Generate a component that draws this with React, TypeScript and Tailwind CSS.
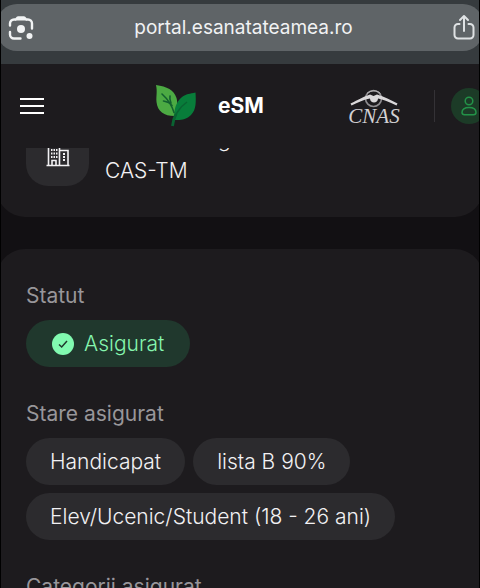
import type { ReactNode } from "react";

const insuredStates = ["Handicapat", "lista B 90%", "Elev/Ucenic/Student (18 - 26 ani)"];

function LensIcon() {
  return (
    <svg className="size-7" viewBox="0 0 28 28" fill="none" stroke="#f1f3f4" strokeWidth="2.4" strokeLinecap="round" aria-hidden="true">
      <path d="M3 11.5V9.5a4 4 0 0 1 4-4h1.5M19.5 5.5H21a4 4 0 0 1 4 4v5M3 18v2.5a4 4 0 0 0 4 4h6.5" />
      <path d="M8 6.6c0-2 1.200-4.400 3-4.400h6c1.800 0 3 2.400 3 4.400z" fill="#f1f3f4" stroke="none" />
      <circle cx="14" cy="15" r="4" fill="#f1f3f4" stroke="none" />
      <circle cx="22.5" cy="22" r="3" fill="#f1f3f4" stroke="none" />
    </svg>
  );
}

function ShareIcon() {
  return (
    <svg className="h-7 w-6" viewBox="0 0 24 28" fill="none" stroke="#dfe2e4" strokeWidth="2" strokeLinecap="round" strokeLinejoin="round" aria-hidden="true">
      <path d="M7.5 10H6a3.500 3.500 0 0 0-3.500 3.500v7.500A3.500 3.500 0 0 0 6 24.500h12a3.500 3.500 0 0 0 3.500-3.500v-7.500A3.500 3.500 0 0 0 18 10h-1.500" />
      <path d="M12 17V2.500M8 6l4-4 4 4" />
    </svg>
  );
}

function LeafLogo() {
  return (
    <svg className="size-11" viewBox="0 0 44 44" aria-hidden="true">
      <path d="M2 1c11 1.500 18 5 20.500 13 1.500 5 .5 12-2 18C10 32 3.500 27.500 2.500 18 2 12 3.500 8 2 1z" fill="#4caa43" />
      <path d="M41.500 8.500c.5 9 1 17-4.500 22.500-4.500 4.500-10.500 5.500-16 5-2-9 1-18.500 7-23 4-3 8-3.200 13.500-4.500z" fill="#087d3a" />
      <path d="M8 10c5 4.500 9.500 10 12 18.500M9.500 17c4 .8 6.500 2 8.500 4.500M16 12c-.5 2.500-.2 4.500 1 7" fill="none" stroke="#12602f" strokeWidth="1.600" strokeLinecap="round" />
      <path d="M18.500 42c.8-5 2-9.500 5-14 2.500-4 6.500-8 9.500-10" fill="none" stroke="#0a6332" strokeWidth="1.500" />
      <path d="M18.500 42c.6-4.500 1.600-8.500 3.500-12" fill="none" stroke="#0a6332" strokeWidth="2.800" />
    </svg>
  );
}

function CnasLogo() {
  return (
    <div className="flex w-14 flex-col items-center">
      <svg className="h-[19px] w-12" viewBox="0 0 48 19" fill="none" aria-hidden="true">
        <circle cx="23.500" cy="9.500" r="8" stroke="#8f8d90" strokeWidth="1.600" />
        <path d="M.5 14.500C8 11 15 7 20 5.500l3.500 1.500L27 5.500c7 2 14 5.500 20.500 9l-1 2C39 13 33 10.500 28 9.500c0 2.500-2 4-4 4s-4-1.500-4-4C14 10.500 8 13.500 1.500 16.500z" fill="#dad8da" />
        <path d="M17 4.500c4-3.500 10-3.500 13.500 0" stroke="#b9b7ba" strokeWidth="1" />
      </svg>
      <span className="font-['Liberation_Serif',serif] text-[21px] leading-4 italic text-[#d2d0d3]">CNAS</span>
    </div>
  );
}

function BuildingIcon() {
  return (
    <svg className="size-6" viewBox="0 0 24 24" fill="none" stroke="#f2f1f3" strokeWidth="1.600" aria-hidden="true">
      <path d="M.5 22.500h23M2.500 22.500V2.500h11v20M14 7.500h8v15M6 22v-4.500h4V22" />
      <path d="M5 7h1.500M7.500 7H9M10 7h1.500M5 10.500h1.500M7.500 10.500H9M10 10.500h1.500M5 14h1.500M7.500 14H9M10 14h1.500" strokeWidth="1.800" />
      <path d="M17 11h2M17 14h2M17 17h2" strokeWidth="1.800" />
    </svg>
  );
}

function UserIcon() {
  return (
    <svg className="h-5 w-4" viewBox="0 0 16 20" fill="none" stroke="#239348" strokeWidth="1.500" aria-hidden="true">
      <circle cx="8" cy="5" r="3.800" />
      <path d="M1 16.500c0-3.200 2.500-5 7-5s7 1.800 7 5c0 1.400-1 2.200-2.500 2.200h-9C2 18.700 1 17.900 1 16.500z" />
    </svg>
  );
}

function BrowserBar() {
  return (
    <div className="h-16 shrink-0 bg-[#363b3e] pt-1">
      <div className="-mx-1 flex h-[47px] items-center justify-between rounded-[20px] bg-[#5f6467] pl-[10px] pr-[7px]">
        <button type="button" aria-label="Lens"><LensIcon /></button>
        <span className="text-[19px] leading-6 text-[#f1f2f3]">portal.esanatateamea.ro</span>
        <button type="button" aria-label="Share"><ShareIcon /></button>
      </div>
    </div>
  );
}

function SiteHeader() {
  return (
    <header className="flex h-[84px] shrink-0 items-center justify-between overflow-hidden bg-[#1d1b1e] pl-[19px]">
      <button type="button" aria-label="Meniu" className="flex w-6 flex-col gap-[5px]">
        <span className="h-[2px] bg-white" />
        <span className="h-[2px] bg-white" />
        <span className="h-[2px] bg-white" />
      </button>
      <a href="#" className="ml-7 flex items-center gap-5">
        <LeafLogo />
        <span className="text-[21px] font-bold leading-7 text-white">eSM</span>
      </a>
      <div className="-mr-2 flex items-center">
        <CnasLogo />
        <div className="ml-8 mr-4 h-8 w-px bg-[#343236]" />
        <button type="button" aria-label="Cont" className="flex size-9 items-center justify-center rounded-full bg-[#1c3b27]">
          <UserIcon />
        </button>
      </div>
    </header>
  );
}

function Section({ title, children }: { title: string; children?: ReactNode }) {
  return (
    <section className="flex flex-col gap-2">
      <h2 className="text-[21px] font-normal leading-8 text-[#98969a]">{title}</h2>
      <div className="flex flex-wrap gap-2">{children}</div>
    </section>
  );
}

export default function App() {
  return (
    <div className="flex h-screen flex-col overflow-hidden border-x border-black bg-[#121013] font-['Inter',sans-serif]">
      <BrowserBar />
      <SiteHeader />
      <main className="flex min-h-0 flex-1 flex-col gap-8 overflow-hidden">
        <div className="-mx-1 flex h-[69px] shrink-0 items-end gap-4 overflow-hidden rounded-b-[28px] bg-[#1d1b1e] px-[29px] pb-[31px]">
          <div className="flex size-[63px] shrink-0 items-center justify-center rounded-[22px] bg-[#2c2b2e]">
            <BuildingIcon />
          </div>
          <div className="text-[21px] font-light leading-[31px] text-[#f2f1f3]">
            <p>Casa de asig</p>
            <p>CAS-TM</p>
          </div>
        </div>
        <div className="-mx-1 flex shrink-0 flex-col gap-[31px] rounded-t-[28px] bg-[#1d1b1e] px-[29px] pt-[31px]">
          <Section title="Statut">
            <div className="flex h-[47px] items-center gap-[10px] rounded-full bg-[#20382d] px-[26px] text-[21px] font-light text-[#85f5ae]">
              <svg className="size-[22px]" viewBox="0 0 22 22" aria-hidden="true">
                <circle cx="11" cy="11" r="11" fill="#81fab0" />
                <path d="M7 11.500l2.700 2.500L15 8" fill="none" stroke="#20382d" strokeWidth="1.500" />
              </svg>
              Asigurat
            </div>
          </Section>
          <Section title="Stare asigurat">
            {insuredStates.map((state) => (
              <div key={state} className="flex h-[47px] items-center rounded-full bg-[#2c2b2e] px-6 text-[21px] font-light text-[#f2f1f3]">
                {state}
              </div>
            ))}
          </Section>
          <Section title="Categorii asigurat" />
        </div>
      </main>
    </div>
  );
}
